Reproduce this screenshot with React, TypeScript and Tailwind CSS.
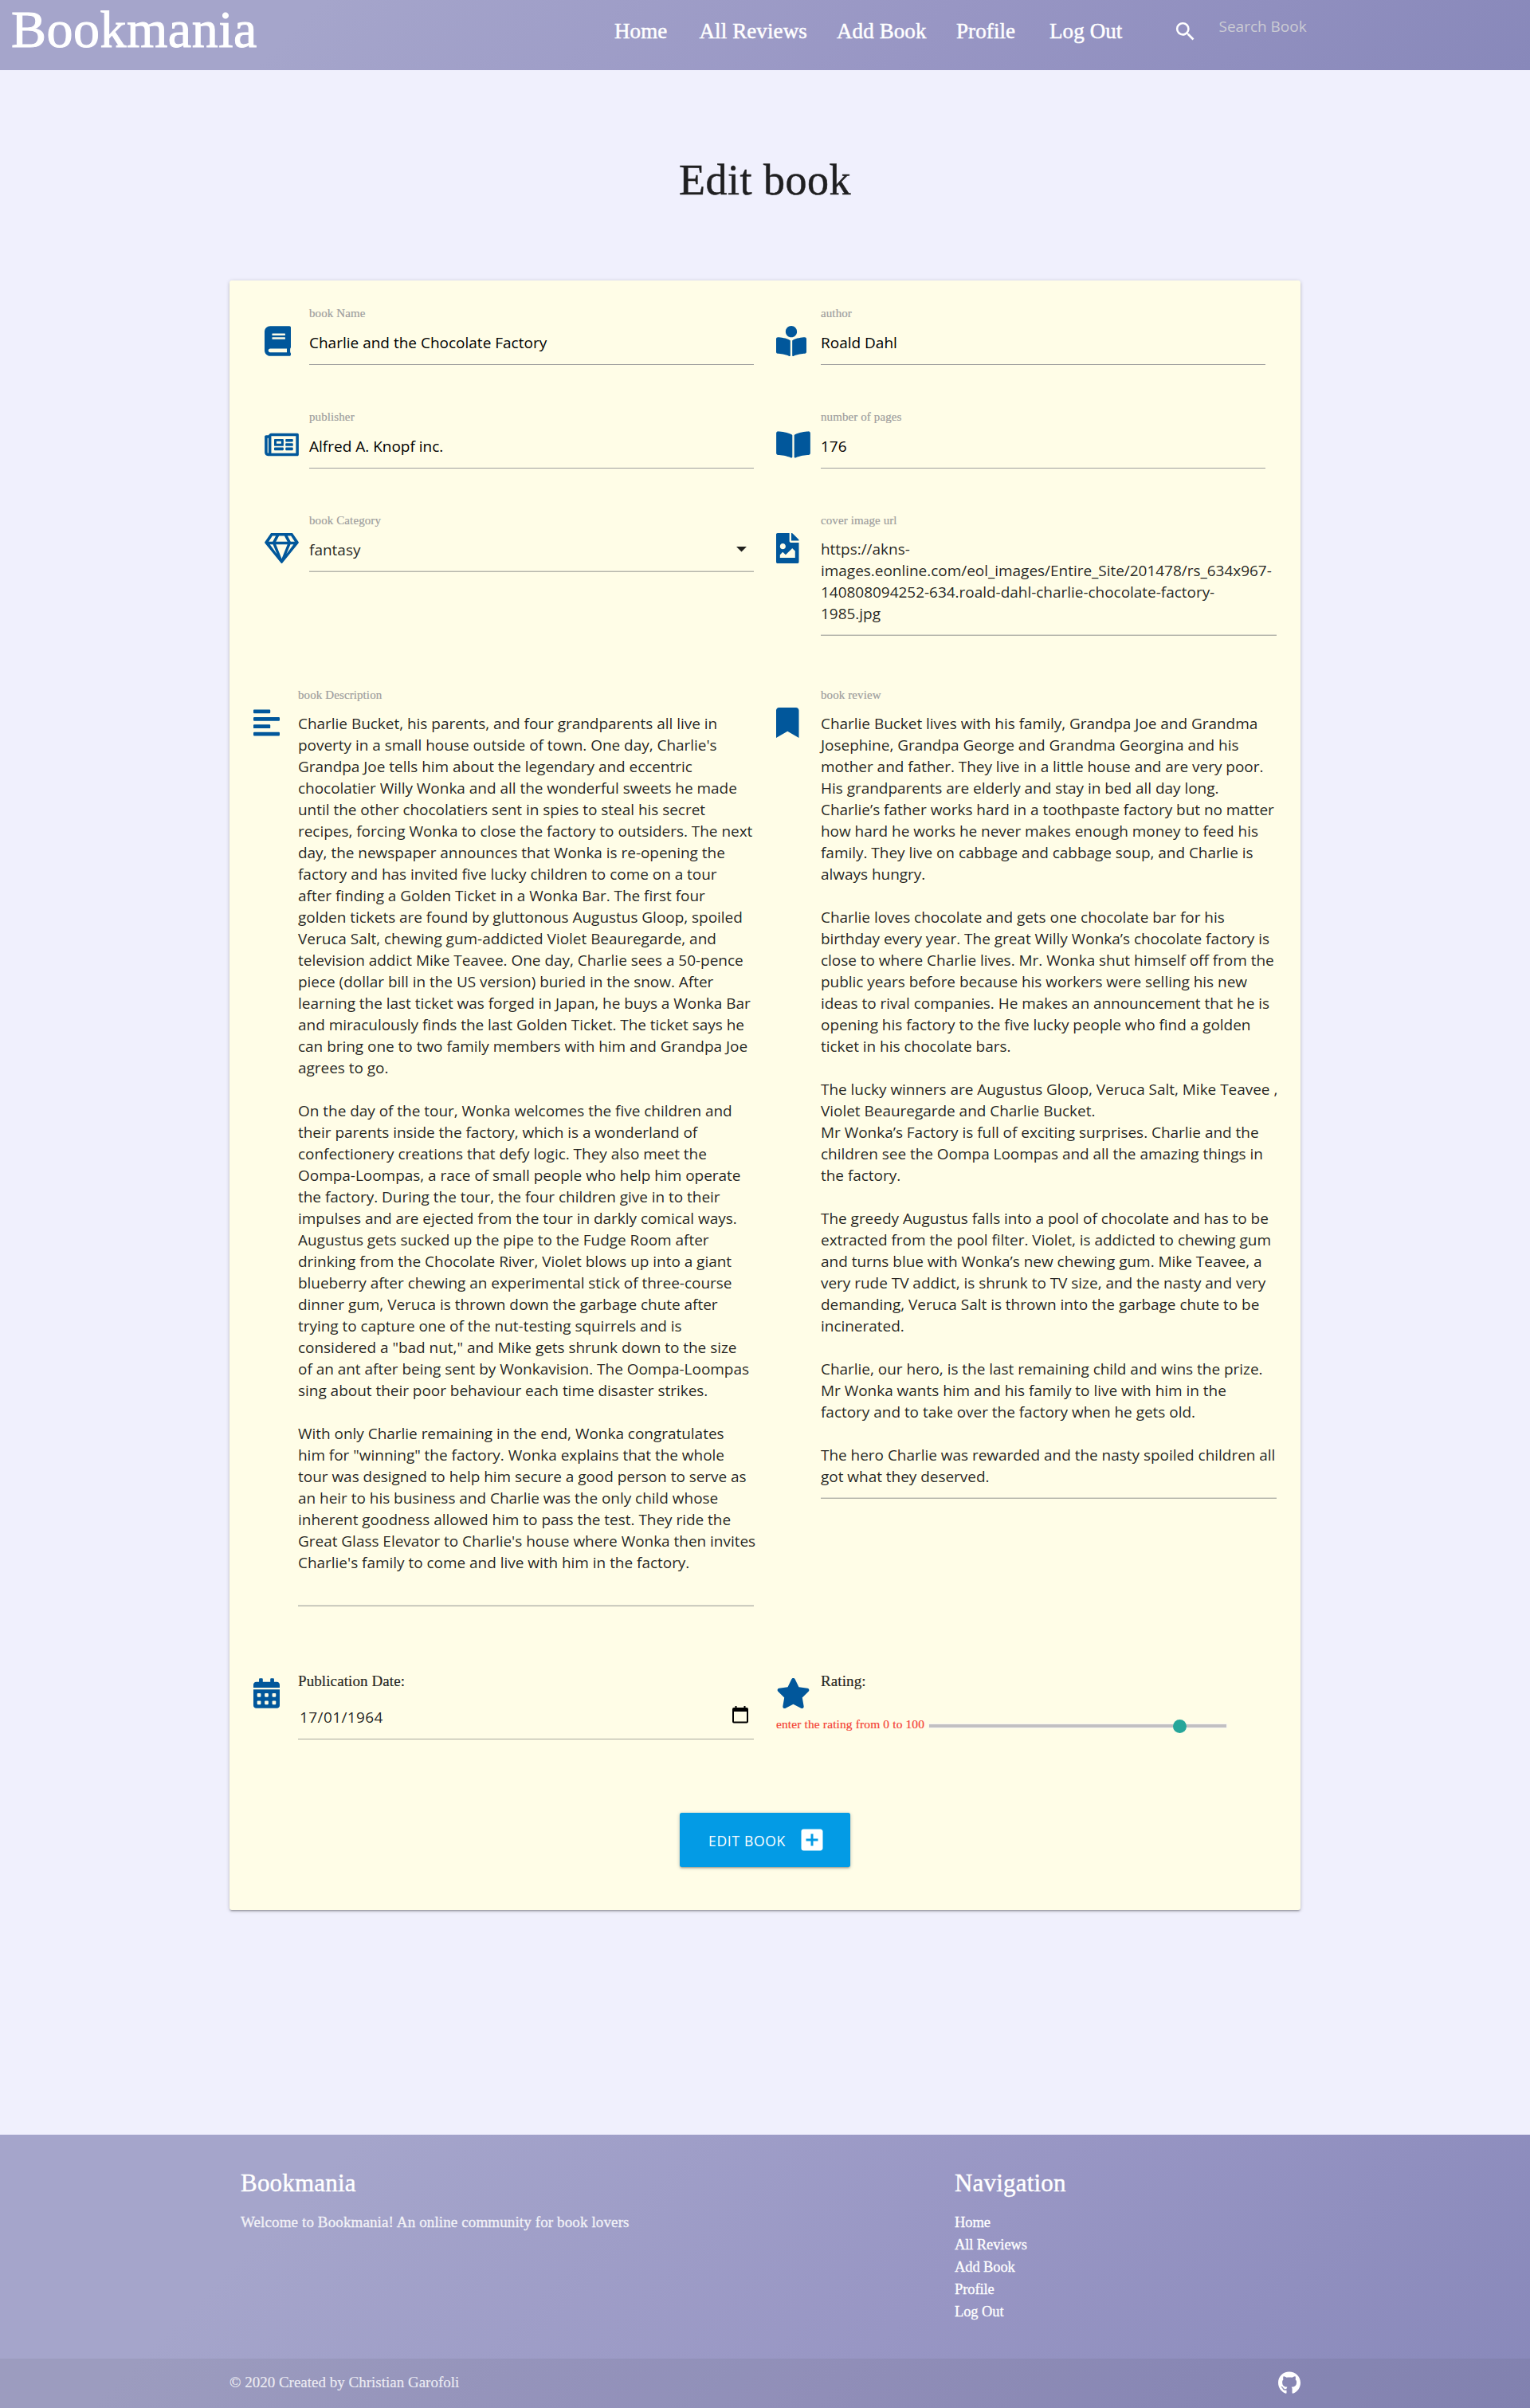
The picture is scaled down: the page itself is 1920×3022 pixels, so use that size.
import type { ReactNode } from "react";
import {
  FaBook,
  FaBookReader,
  FaRegNewspaper,
  FaBookOpen,
  FaRegGem,
  FaFileImage,
  FaAlignLeft,
  FaBookmark,
  FaCalendarAlt,
  FaStar,
  FaGithub,
} from "react-icons/fa";
import { MdSearch, MdAddBox, MdArrowDropDown } from "react-icons/md";

const description = `Charlie Bucket, his parents, and four grandparents all live in
poverty in a small house outside of town. One day, Charlie's
Grandpa Joe tells him about the legendary and eccentric
chocolatier Willy Wonka and all the wonderful sweets he made
until the other chocolatiers sent in spies to steal his secret
recipes, forcing Wonka to close the factory to outsiders. The next
day, the newspaper announces that Wonka is re-opening the
factory and has invited five lucky children to come on a tour
after finding a Golden Ticket in a Wonka Bar. The first four
golden tickets are found by gluttonous Augustus Gloop, spoiled
Veruca Salt, chewing gum-addicted Violet Beauregarde, and
television addict Mike Teavee. One day, Charlie sees a 50-pence
piece (dollar bill in the US version) buried in the snow. After
learning the last ticket was forged in Japan, he buys a Wonka Bar
and miraculously finds the last Golden Ticket. The ticket says he
can bring one to two family members with him and Grandpa Joe
agrees to go.

On the day of the tour, Wonka welcomes the five children and
their parents inside the factory, which is a wonderland of
confectionery creations that defy logic. They also meet the
Oompa-Loompas, a race of small people who help him operate
the factory. During the tour, the four children give in to their
impulses and are ejected from the tour in darkly comical ways.
Augustus gets sucked up the pipe to the Fudge Room after
drinking from the Chocolate River, Violet blows up into a giant
blueberry after chewing an experimental stick of three-course
dinner gum, Veruca is thrown down the garbage chute after
trying to capture one of the nut-testing squirrels and is
considered a "bad nut," and Mike gets shrunk down to the size
of an ant after being sent by Wonkavision. The Oompa-Loompas
sing about their poor behaviour each time disaster strikes.

With only Charlie remaining in the end, Wonka congratulates
him for "winning" the factory. Wonka explains that the whole
tour was designed to help him secure a good person to serve as
an heir to his business and Charlie was the only child whose
inherent goodness allowed him to pass the test. They ride the
Great Glass Elevator to Charlie's house where Wonka then invites
Charlie's family to come and live with him in the factory.`;

const review = `Charlie Bucket lives with his family, Grandpa Joe and Grandma
Josephine, Grandpa George and Grandma Georgina and his
mother and father. They live in a little house and are very poor.
His grandparents are elderly and stay in bed all day long.
Charlie’s father works hard in a toothpaste factory but no matter
how hard he works he never makes enough money to feed his
family. They live on cabbage and cabbage soup, and Charlie is
always hungry.

Charlie loves chocolate and gets one chocolate bar for his
birthday every year. The great Willy Wonka’s chocolate factory is
close to where Charlie lives. Mr. Wonka shut himself off from the
public years before because his workers were selling his new
ideas to rival companies. He makes an announcement that he is
opening his factory to the five lucky people who find a golden
ticket in his chocolate bars.

The lucky winners are Augustus Gloop, Veruca Salt, Mike Teavee ,
Violet Beauregarde and Charlie Bucket.
Mr Wonka’s Factory is full of exciting surprises. Charlie and the
children see the Oompa Loompas and all the amazing things in
the factory.

The greedy Augustus falls into a pool of chocolate and has to be
extracted from the pool filter. Violet, is addicted to chewing gum
and turns blue with Wonka’s new chewing gum. Mike Teavee, a
very rude TV addict, is shrunk to TV size, and the nasty and very
demanding, Veruca Salt is thrown into the garbage chute to be
incinerated.

Charlie, our hero, is the last remaining child and wins the prize.
Mr Wonka wants him and his family to live with him in the
factory and to take over the factory when he gets old.

The hero Charlie was rewarded and the nasty spoiled children all
got what they deserved.`;

const cover = `https://akns-
images.eonline.com/eol_images/Entire_Site/201478/rs_634x967-
140808094252-634.roald-dahl-charlie-chocolate-factory-
1985.jpg`;

function Label({ children }: { children: ReactNode }) {
  return <div className="h-5 text-[15px] leading-5 tracking-[0.1px] text-[#9e9e9e] [-webkit-text-stroke:0.2px_#9e9e9e]">{children}</div>;
}

function IconSlot({ children, className }: { children: ReactNode; className: string }) {
  return <div className={`shrink-0 pt-[26px] text-[#01579b] ${className}`}>{children}</div>;
}

function TextField({ label, value }: { label: string; value: string }) {
  return (
    <div className="w-[558px]">
      <Label>{label}</Label>
      <div className="mt-[13px] h-[42px] border-b border-[#9e9e9e] pt-px font-['Open_Sans',sans-serif] text-[19px] leading-[27px] text-black">
        {value}
      </div>
    </div>
  );
}

function TextArea({ label, value }: { label: string; value: string }) {
  return (
    <div className="w-[572px]">
      <Label>{label}</Label>
      <div className="mt-[13px] border-b border-[#b5b5aa] pb-[13px] font-['Open_Sans',sans-serif] text-[19px] leading-[27px] tracking-[-0.03px] whitespace-pre text-black/87 shadow-[inset_0_-1px_0_#dcdbce]">
        {value}
      </div>
    </div>
  );
}

const navItems: [string, string][] = [
  ["Home", "w-[106.5px]"],
  ["All Reviews", "w-[172.5px]"],
  ["Add Book", "w-[150px]"],
  ["Profile", "w-[117px]"],
  ["Log Out", "w-[154.5px]"],
];

const gradient = "bg-[linear-gradient(135deg,#a5a5cb_20%,#9896c4_60%,#8888ba_100%)]";

export default function App() {
  return (
    <div className="min-h-[3022px] w-[1920px] bg-[#f0f0fd] font-['Liberation_Serif',serif] text-black/87">
      <header className={`flex h-[88px] items-start text-white ${gradient}`}>
        <div className="w-[771px] pl-[14px] text-[66px] leading-[74px] tracking-[0.5px] [-webkit-text-stroke:1px_white]">
          Bookmania
        </div>
        <nav className="flex pt-6 text-[27px] leading-[30px] tracking-[0.1px] [-webkit-text-stroke:0.5px_white]">
          {navItems.map(([name, width]) => (
            <a key={name} className={width}>
              {name}
            </a>
          ))}
        </nav>
        <MdSearch className="mt-[24px] h-[31px] w-[31px]" />
        <div className="ml-[27px] pt-5 font-['Open_Sans',sans-serif] text-[19px] leading-[27px] text-[#cbcbd3]">
          Search Book
        </div>
      </header>

      <h1 className="mt-[108px] text-center text-[54px] leading-[60px] tracking-[0.5px] [-webkit-text-stroke:0.5px_#212121]">Edit book</h1>

      <main className="mx-auto mt-24 h-[2045px] w-[1344px] rounded-[3px] bg-[#fffde7] pt-[31px] shadow-[0_2px_2px_0_rgba(0,0,0,0.14),0_3px_1px_-2px_rgba(0,0,0,0.12),0_1px_5px_0_rgba(0,0,0,0.2)]">
        <div className="flex h-[130px]">
          <IconSlot className="ml-11 w-14"><FaBook className="h-[38px] w-[33px]" /></IconSlot>
          <TextField label="book Name" value="Charlie and the Chocolate Factory" />
          <IconSlot className="ml-7 w-14"><FaBookReader className="h-[38px] w-[38px]" /></IconSlot>
          <TextField label="author" value="Roald Dahl" />
        </div>
        <div className="flex h-[130px]">
          <IconSlot className="ml-11 w-14"><FaRegNewspaper className="h-[38px] w-[43px]" /></IconSlot>
          <TextField label="publisher" value="Alfred A. Knopf inc." />
          <IconSlot className="ml-7 w-14"><FaBookOpen className="h-[38px] w-[43px]" /></IconSlot>
          <TextField label="number of pages" value="176" />
        </div>
        <div className="flex h-[219px]">
          <IconSlot className="ml-11 w-14"><FaRegGem className="h-[38px] w-[43px]" /></IconSlot>
          <div className="w-[558px]">
            <Label>book Category</Label>
            <div className="mt-[13px] flex h-[42px] justify-between border-b border-[#b5b5aa] font-['Open_Sans',sans-serif] text-[19px] leading-[27px] shadow-[inset_0_-1px_0_#dcdbce]">
              <span className="pt-px">fantasy</span>
              <MdArrowDropDown className="-mt-[3px] h-[31px] w-[31px]" />
            </div>
          </div>
          <IconSlot className="ml-7 w-14"><FaFileImage className="h-[38px] w-[28.5px]" /></IconSlot>
          <TextArea label="cover image url" value={cover} />
        </div>
        <div className="flex h-[1234px] items-start">
          <IconSlot className="ml-[30px] w-14"><FaAlignLeft className="h-[38px] w-[33px]" /></IconSlot>
          <TextArea label="book Description" value={description + "\n "} />
          <IconSlot className="ml-7 w-14"><FaBookmark className="h-[38px] w-[28.5px]" /></IconSlot>
          <TextArea label="book review" value={review} />
        </div>
        <div className="flex h-[179px] items-start">
          <div className="ml-[30px] w-14 shrink-0 pt-[10px] text-[#01579b]"><FaCalendarAlt className="h-[38px] w-[33px]" /></div>
          <div className="w-[572px]">
            <div className="text-[19px] leading-[27px] tracking-[0.1px] [-webkit-text-stroke:0.2px_#212121]">Publication Date:</div>
            <div className="mt-[18px] flex h-[42px] justify-between border-b border-[#a9a99f] pr-[7px] pl-[2px] font-['Open_Sans',sans-serif] text-[19px] leading-[27px] tracking-[0.4px]">
              <span className="pt-px">17/01/1964</span>
              <svg viewBox="0 0 20 22" className="h-[22px] w-5 text-black" fill="none" stroke="currentColor">
                <rect x="1" y="3" width="18" height="17.5" rx="1" strokeWidth="2" />
                <path d="M1 5h18M4.5 0v4M15.5 0v4" strokeWidth="2" />
                <path d="M1 5h18" strokeWidth="4" />
              </svg>
            </div>
          </div>
          <div className="ml-7">
            <div className="flex h-[58px]">
              <div className="w-14 pt-[10px] text-[#01579b]"><FaStar className="h-[38px] w-[43px]" /></div>
              <div className="text-[19px] leading-[27px] tracking-[0.1px] [-webkit-text-stroke:0.2px_#212121]">Rating:</div>
            </div>
            <div className="flex">
              <div className="w-[192px] text-[15.5px] leading-5 tracking-[0.12px] whitespace-nowrap text-[#f44336] [-webkit-text-stroke:0.2px_#f44336]">
                enter the rating from 0 to 100
              </div>
              <div className="relative mt-[10px] h-1 w-[373px] bg-[#c2c0c2] ring-1 ring-[#f8f7f1]">
                <div className="absolute -top-[6px] left-[306px] h-[17px] w-[17px] rounded-full bg-[#26a69a]" />
              </div>
            </div>
          </div>
        </div>
        <button className="mx-auto flex h-[68px] w-[214px] items-center rounded-[2.5px] bg-[#039be5] pl-9 font-['Open_Sans',sans-serif] text-[17.5px] tracking-[0.7px] text-white shadow-[0_2px_2px_0_rgba(0,0,0,0.14),0_3px_1px_-2px_rgba(0,0,0,0.12),0_1px_5px_0_rgba(0,0,0,0.2)]">
          <span className="w-[111.5px] pt-[3px] text-left">EDIT BOOK</span>
          <MdAddBox className="h-9 w-9" />
        </button>
      </main>

      <footer className={`mt-[282px] h-[343px] text-white ${gradient}`}>
        <div className="flex h-[281px] pt-[43px]">
          <section className="ml-[302px] w-[896px]">
            <h2 className="text-[31px] leading-9 tracking-[0.2px] [-webkit-text-stroke:0.4px_white]">Bookmania</h2>
            <p className="mt-[17px] text-[19px] leading-7 tracking-[0.12px] text-[#f2f2f7] [-webkit-text-stroke:0.3px_#f2f2f7]">
              Welcome to Bookmania! An online community for book lovers
            </p>
          </section>
          <section>
            <h2 className="text-[31px] leading-9 tracking-[0.2px] [-webkit-text-stroke:0.4px_white]">Navigation</h2>
            <ul className="mt-[17px] text-[18.5px] leading-7 tracking-[-0.1px] [-webkit-text-stroke:0.3px_white]">
              {navItems.map(([name]) => (
                <li key={name}>{name}</li>
              ))}
            </ul>
          </section>
        </div>
        <div className="flex h-[62px] items-center justify-between bg-[#333333]/8 px-72">
          <span className="-mt-[2px] text-[19px] text-white/80 [-webkit-text-stroke:0.2px_#ffffff99]">
            © 2020 Created by Christian Garofoli
          </span>
          <FaGithub className="-mt-[2px] h-[29px] w-[28px]" />
        </div>
      </footer>
    </div>
  );
}
